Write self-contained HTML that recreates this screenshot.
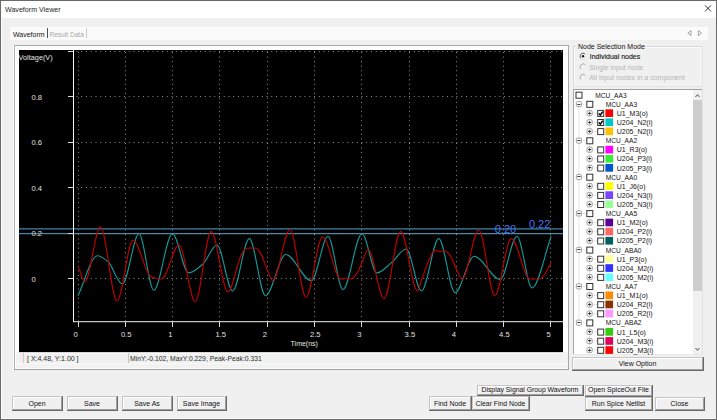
<!DOCTYPE html>
<html><head><meta charset="utf-8">
<style>
html,body{margin:0;padding:0;width:717px;height:420px;overflow:hidden;background:#f0f0f0;}
svg{display:block;font-family:"Liberation Sans", sans-serif;}
</style></head><body>
<svg width="717" height="420" viewBox="0 0 717 420">
<rect x="0" y="0" width="717" height="420" fill="#f0f0f0" />
<rect x="1" y="1" width="715" height="17" fill="#ffffff" />
<text transform="translate(5,11.6) scale(0.92,1)" fill="#1e1e1e" font-size="7.72" text-anchor="start" >Waveform Viewer</text>
<path d="M705,5.4 L711,11.4 M711,5.4 L705,11.4" stroke="#1a1a1a" stroke-width="0.9"/>
<rect x="0" y="0" width="717" height="1" fill="#6a6a6a" />
<rect x="0" y="0" width="1" height="420" fill="#6a6a6a" />
<rect x="716" y="0" width="1" height="420" fill="#6a6a6a" />
<rect x="0" y="419" width="717" height="1" fill="#6a6a6a" />
<rect x="1" y="18" width="1" height="401" fill="#fdfdfd" />
<rect x="1" y="418" width="715" height="1" fill="#fafafa" />
<rect x="10" y="27" width="698" height="13" fill="#fbfbfb" />
<text transform="translate(13,36.5) scale(0.92,1)" fill="#141414" font-size="7.61" text-anchor="start" >Waveform</text>
<rect x="47" y="28" width="1" height="10" fill="#505050" />
<text transform="translate(49.4,36.5) scale(0.92,1)" fill="#a6a6a6" font-size="7.17" text-anchor="start" >Result Data</text>
<rect x="86" y="28" width="1" height="10" fill="#c8c8c8" />
<path d="M691,30.6 L687.8,33.1 L691,35.6 Z" fill="none" stroke="#9c9c9c" stroke-width="0.9"/>
<path d="M698.3,30.6 L701.5,33.1 L698.3,35.6 Z" fill="none" stroke="#9c9c9c" stroke-width="0.9"/>
<rect x="13" y="45" width="1" height="326" fill="#fcfcfc" />
<rect x="14" y="45" width="555" height="325" fill="#f2f2f2" />
<rect x="14" y="45" width="555" height="1" fill="#a8a8a8" />
<rect x="14" y="45" width="1" height="325" fill="#b0b0b0" />
<rect x="568" y="45" width="1" height="325" fill="#a8a8a8" />
<rect x="14" y="369" width="555" height="1" fill="#a0a0a0" />
<rect x="15" y="46" width="1" height="323" fill="#ffffff" />
<rect x="15" y="368" width="553" height="1" fill="#fcfcfc" />
<rect x="16" y="46" width="552" height="306" fill="#fdfdfd" />
<rect x="19" y="352" width="544" height="12" fill="#f0f0f0" />
<rect x="19" y="352" width="544" height="1" fill="#d8d8d8" />
<rect x="19" y="353" width="544" height="1" fill="#f8f8f8" />
<rect x="19" y="363" width="549" height="1" fill="#fafafa" />
<rect x="23" y="353" width="1" height="10" fill="#cccccc" />
<rect x="128" y="353" width="1" height="10" fill="#c4c4c4" />
<text transform="translate(27,360.9) scale(0.92,1)" fill="#2a2a2a" font-size="7.61" text-anchor="start" >[ X:4.48, Y:1.00 ]</text>
<text transform="translate(130,360.9) scale(0.92,1)" fill="#2a2a2a" font-size="7.39" text-anchor="start" >MinY:-0.102, MaxY:0.229, Peak-Peak:0.331</text>
<rect x="19" y="50" width="544" height="302" fill="#000000" />
<line x1="19" y1="228.8" x2="563" y2="228.8" stroke="#3e86aa" stroke-width="1.3" />
<line x1="19" y1="233.7" x2="563" y2="233.7" stroke="#3e86aa" stroke-width="1.3" />
<line x1="78.5" y1="52" x2="78.5" y2="321" stroke="#8c8c8c" stroke-width="1" stroke-dasharray="1 3.55"/>
<line x1="125.5" y1="52" x2="125.5" y2="321" stroke="#8c8c8c" stroke-width="1" stroke-dasharray="1 3.55"/>
<line x1="172.5" y1="52" x2="172.5" y2="321" stroke="#8c8c8c" stroke-width="1" stroke-dasharray="1 3.55"/>
<line x1="219.5" y1="52" x2="219.5" y2="321" stroke="#8c8c8c" stroke-width="1" stroke-dasharray="1 3.55"/>
<line x1="267.5" y1="52" x2="267.5" y2="321" stroke="#8c8c8c" stroke-width="1" stroke-dasharray="1 3.55"/>
<line x1="314.5" y1="52" x2="314.5" y2="321" stroke="#8c8c8c" stroke-width="1" stroke-dasharray="1 3.55"/>
<line x1="361.5" y1="52" x2="361.5" y2="321" stroke="#8c8c8c" stroke-width="1" stroke-dasharray="1 3.55"/>
<line x1="409.5" y1="52" x2="409.5" y2="321" stroke="#8c8c8c" stroke-width="1" stroke-dasharray="1 3.55"/>
<line x1="456.5" y1="52" x2="456.5" y2="321" stroke="#8c8c8c" stroke-width="1" stroke-dasharray="1 3.55"/>
<line x1="503.5" y1="52" x2="503.5" y2="321" stroke="#8c8c8c" stroke-width="1" stroke-dasharray="1 3.55"/>
<line x1="550.5" y1="52" x2="550.5" y2="321" stroke="#8c8c8c" stroke-width="1" stroke-dasharray="1 3.55"/>
<line x1="76.5" y1="51.5" x2="563" y2="51.5" stroke="#8c8c8c" stroke-width="1" stroke-dasharray="1 3.75"/>
<line x1="76.5" y1="96.5" x2="563" y2="96.5" stroke="#8c8c8c" stroke-width="1" stroke-dasharray="1 3.75"/>
<line x1="76.5" y1="142.5" x2="563" y2="142.5" stroke="#8c8c8c" stroke-width="1" stroke-dasharray="1 3.75"/>
<line x1="76.5" y1="187.5" x2="563" y2="187.5" stroke="#8c8c8c" stroke-width="1" stroke-dasharray="1 3.75"/>
<line x1="76.5" y1="233.5" x2="563" y2="233.5" stroke="#8c8c8c" stroke-width="1" stroke-dasharray="1 3.75"/>
<line x1="76.5" y1="278.5" x2="563" y2="278.5" stroke="#8c8c8c" stroke-width="1" stroke-dasharray="1 3.75"/>
<line x1="73.5" y1="50" x2="73.5" y2="322" stroke="#f4f4f4" stroke-width="1" />
<line x1="73" y1="321.7" x2="563" y2="321.7" stroke="#f4f4f4" stroke-width="1" />
<line x1="68" y1="51.5" x2="73" y2="51.5" stroke="#d8d8d8" stroke-width="1" />
<line x1="68" y1="96.5" x2="73" y2="96.5" stroke="#d8d8d8" stroke-width="1" />
<line x1="68" y1="142.5" x2="73" y2="142.5" stroke="#d8d8d8" stroke-width="1" />
<line x1="68" y1="187.5" x2="73" y2="187.5" stroke="#d8d8d8" stroke-width="1" />
<line x1="68" y1="233.5" x2="73" y2="233.5" stroke="#d8d8d8" stroke-width="1" />
<line x1="68" y1="278.5" x2="73" y2="278.5" stroke="#d8d8d8" stroke-width="1" />
<line x1="78.5" y1="322" x2="78.5" y2="327" stroke="#d8d8d8" stroke-width="1" />
<line x1="125.5" y1="322" x2="125.5" y2="327" stroke="#d8d8d8" stroke-width="1" />
<line x1="172.5" y1="322" x2="172.5" y2="327" stroke="#d8d8d8" stroke-width="1" />
<line x1="219.5" y1="322" x2="219.5" y2="327" stroke="#d8d8d8" stroke-width="1" />
<line x1="267.5" y1="322" x2="267.5" y2="327" stroke="#d8d8d8" stroke-width="1" />
<line x1="314.5" y1="322" x2="314.5" y2="327" stroke="#d8d8d8" stroke-width="1" />
<line x1="361.5" y1="322" x2="361.5" y2="327" stroke="#d8d8d8" stroke-width="1" />
<line x1="409.5" y1="322" x2="409.5" y2="327" stroke="#d8d8d8" stroke-width="1" />
<line x1="456.5" y1="322" x2="456.5" y2="327" stroke="#d8d8d8" stroke-width="1" />
<line x1="503.5" y1="322" x2="503.5" y2="327" stroke="#d8d8d8" stroke-width="1" />
<line x1="550.5" y1="322" x2="550.5" y2="327" stroke="#d8d8d8" stroke-width="1" />
<text x="31.5" y="99.8" fill="#e0e0e0" font-size="7.6" text-anchor="start" >0.8</text>
<text x="31.5" y="145.3" fill="#e0e0e0" font-size="7.6" text-anchor="start" >0.6</text>
<text x="31.5" y="190.7" fill="#e0e0e0" font-size="7.6" text-anchor="start" >0.4</text>
<text x="31.5" y="236.2" fill="#e0e0e0" font-size="7.6" text-anchor="start" >0.2</text>
<text x="31.5" y="281.7" fill="#e0e0e0" font-size="7.6" text-anchor="start" >0</text>
<text x="73.6" y="337.0" fill="#e0e0e0" font-size="7.6" text-anchor="start" >0</text>
<text x="120.9" y="337.0" fill="#e0e0e0" font-size="7.6" text-anchor="start" >0.5</text>
<text x="168.2" y="337.0" fill="#e0e0e0" font-size="7.6" text-anchor="start" >1</text>
<text x="215.4" y="337.0" fill="#e0e0e0" font-size="7.6" text-anchor="start" >1.5</text>
<text x="262.7" y="337.0" fill="#e0e0e0" font-size="7.6" text-anchor="start" >2</text>
<text x="310.0" y="337.0" fill="#e0e0e0" font-size="7.6" text-anchor="start" >2.5</text>
<text x="357.3" y="337.0" fill="#e0e0e0" font-size="7.6" text-anchor="start" >3</text>
<text x="404.6" y="337.0" fill="#e0e0e0" font-size="7.6" text-anchor="start" >3.5</text>
<text x="451.8" y="337.0" fill="#e0e0e0" font-size="7.6" text-anchor="start" >4</text>
<text x="499.1" y="337.0" fill="#e0e0e0" font-size="7.6" text-anchor="start" >4.5</text>
<text x="546.4" y="337.0" fill="#e0e0e0" font-size="7.6" text-anchor="start" >5</text>
<text x="18.6" y="60.0" fill="#e6e6e6" font-size="7.3" text-anchor="start" >Voltage(V)</text>
<text transform="translate(290.6,346.2) scale(0.92,1)" fill="#e6e6e6" font-size="7.61" text-anchor="start" >Time(ns)</text>
<path d="M78.0,295.7 C84.5,282.4 90.9,255.7 97.4,255.7 C100.9,255.7 104.5,258.8 108.0,261.7 C112.8,265.6 117.6,283.8 122.4,283.8 C127.9,283.8 133.5,233.8 139.0,233.8 C143.9,233.8 148.9,290.2 153.8,290.2 C160.0,290.2 166.2,233.8 172.4,233.8 C177.8,233.8 183.2,272.9 188.6,272.9 C193.4,272.9 198.1,268.1 202.9,264.0 C207.6,260.0 212.3,245.0 217.0,245.0 C222.2,245.0 227.4,291.0 232.6,291.0 C238.2,291.0 243.7,238.6 249.3,238.6 C254.7,238.6 260.1,295.7 265.5,295.7 C272.2,295.7 279.0,254.5 285.7,254.5 C294.3,254.5 302.8,280.7 311.4,280.7 C316.9,280.7 322.5,236.2 328.0,236.2 C333.0,236.2 337.9,289.5 342.9,289.5 C349.3,289.5 355.6,233.8 362.0,233.8 C367.0,233.8 371.9,272.9 376.9,272.9 C381.7,272.9 386.4,266.7 391.2,262.9 C396.2,258.9 401.2,249.0 406.2,249.0 C411.3,249.0 416.3,291.0 421.4,291.0 C427.2,291.0 433.0,238.6 438.8,238.6 C444.2,238.6 449.6,292.6 455.0,292.6 C461.3,292.6 467.7,256.2 474.0,256.2 C482.7,256.2 491.5,279.5 500.2,279.5 C505.8,279.5 511.4,236.2 517.0,236.2 C522.0,236.2 527.0,287.9 532.0,287.9 C538.4,287.9 544.8,253.4 551.2,236.2" fill="none" stroke="#139797" stroke-width="1.15"/>
<path d="M78.3,266.4 C80.5,271.6 82.6,281.9 84.8,281.9 C90.0,281.9 95.3,226.7 100.5,226.7 C106.0,226.7 111.5,301.0 117.0,301.0 C122.3,301.0 127.7,240.2 133.0,240.2 C139.0,240.2 145.0,274.5 151.0,276.7 C154.6,278.0 158.1,279.0 161.7,279.0 C167.5,279.0 173.2,245.0 179.0,245.0 C184.4,245.0 189.8,301.7 195.2,301.7 C200.5,301.7 205.9,231.4 211.2,231.4 C216.8,231.4 222.3,291.9 227.9,291.9 C232.4,291.9 237.0,262.0 241.5,254.6 C243.2,251.9 244.8,248.5 246.5,248.3 C248.2,248.1 249.8,248.0 251.5,248.0 C253.2,248.0 254.8,248.1 256.5,248.3 C258.1,248.5 259.6,251.9 261.2,254.6 C263.1,257.9 265.1,264.7 267.0,269.0 C268.9,273.3 270.9,280.6 272.8,280.6 C278.5,280.6 284.3,229.5 290.0,229.5 C295.3,229.5 300.7,297.4 306.0,297.4 C311.5,297.4 317.1,236.7 322.6,236.7 C328.7,236.7 334.7,279.2 340.8,279.2 C342.4,279.2 343.9,278.2 345.5,278.2 C347.3,278.2 349.2,278.8 351.0,278.8 C353.0,278.8 355.0,275.8 357.0,273.2 C358.7,271.0 360.3,266.2 362.0,262.6 C364.0,258.3 366.1,249.5 368.1,249.5 C373.4,249.5 378.7,298.6 384.0,298.6 C389.6,298.6 395.1,231.4 400.7,231.4 C406.3,231.4 411.8,291.0 417.4,291.0 C418.9,291.0 420.3,283.2 421.8,279.3 C424.4,272.5 426.9,264.1 429.5,259.0 C431.2,255.7 432.8,250.7 434.5,250.7 C436.3,250.7 438.2,251.3 440.0,251.3 C441.7,251.3 443.3,250.7 445.0,250.7 C447.0,250.7 449.0,254.1 451.0,257.0 C452.6,259.3 454.1,264.2 455.7,267.4 C457.8,271.7 459.9,279.3 462.0,279.3 C467.6,279.3 473.2,230.0 478.8,230.0 C484.1,230.0 489.5,295.7 494.8,295.7 C500.3,295.7 505.7,238.6 511.2,238.6 C517.5,238.6 523.7,279.0 530.0,279.0 C533.3,279.0 536.7,279.0 540.0,279.0 C543.7,279.0 547.5,268.3 551.2,262.9" fill="none" stroke="#bb0000" stroke-width="1.15"/>
<text x="494.8" y="233.3" fill="#4474f4" font-size="11" text-anchor="start" >0.20</text>
<text x="528.9" y="228.0" fill="#4474f4" font-size="11" text-anchor="start" >0.22</text>
<rect x="573.5" y="46.5" width="128.5" height="39.5" fill="none" stroke="#d8d8d8" stroke-width="1"/>
<rect x="574.5" y="47.5" width="126.5" height="37.5" fill="none" stroke="#fbfbfb" stroke-width="1"/>
<rect x="576" y="42" width="70" height="8" fill="#f0f0f0" />
<text transform="translate(578,48.6) scale(0.92,1)" fill="#141414" font-size="7.61" text-anchor="start" >Node Selection Mode</text>
<circle cx="583.0" cy="56.2" r="3.0" fill="#ffffff"/>
<path d="M580.88,58.32 A3.0,3.0 0 0 1 585.12,54.08" fill="none" stroke="#5a5a5a" stroke-width="1"/>
<path d="M585.12,54.08 A3.0,3.0 0 0 1 580.88,58.32" fill="none" stroke="#d8d8d8" stroke-width="1"/>
<circle cx="583.0" cy="56.2" r="1.2" fill="#111"/>
<circle cx="583.0" cy="66.8" r="3.0" fill="#f2f2f2"/>
<path d="M580.88,68.92 A3.0,3.0 0 0 1 585.12,64.68" fill="none" stroke="#a8a8a8" stroke-width="1"/>
<path d="M585.12,64.68 A3.0,3.0 0 0 1 580.88,68.92" fill="none" stroke="#ececec" stroke-width="1"/>
<circle cx="583.0" cy="77.4" r="3.0" fill="#f2f2f2"/>
<path d="M580.88,79.52 A3.0,3.0 0 0 1 585.12,75.28" fill="none" stroke="#a8a8a8" stroke-width="1"/>
<path d="M585.12,75.28 A3.0,3.0 0 0 1 580.88,79.52" fill="none" stroke="#ececec" stroke-width="1"/>
<text transform="translate(589.7,59) scale(0.92,1)" fill="#141414" font-size="7.61" text-anchor="start" stroke="#141414" stroke-width="0.12">Individual nodes</text>
<text transform="translate(589.2,69.8) scale(0.92,1)" fill="#b6b6b6" font-size="7.61" text-anchor="start" >Single input node</text>
<text transform="translate(589.2,80.3) scale(0.92,1)" fill="#b6b6b6" font-size="7.61" text-anchor="start" >All input nodes in a component</text>
<rect x="573" y="89" width="130" height="266" fill="#ffffff" />
<rect x="573" y="89" width="130" height="1" fill="#a0a0a0" />
<rect x="573" y="89" width="1" height="266" fill="#a8a8a8" />
<rect x="702" y="89" width="1" height="266" fill="#e0e0e0" />
<rect x="573" y="354" width="130" height="1" fill="#e8e8e8" />
<rect x="693" y="90" width="9" height="264" fill="#f0f0f0" />
<rect x="693" y="100" width="9" height="191" fill="#cdcdcd" />
<path d="M695.5,97 L697.5,94.6 L699.5,97" fill="none" stroke="#555" stroke-width="1"/>
<path d="M695.5,348 L697.5,350.4 L699.5,348" fill="none" stroke="#555" stroke-width="1"/>
<rect x="605.4" y="109.3" width="7.7" height="7.7" fill="#ff0000" />
<rect x="605.4" y="118.4" width="7.7" height="7.7" fill="#00c8c8" />
<rect x="605.4" y="127.5" width="7.7" height="7.7" fill="#ffc000" />
<rect x="605.4" y="145.8" width="7.7" height="7.7" fill="#ff00ff" />
<rect x="605.4" y="154.9" width="7.7" height="7.7" fill="#33ee33" />
<rect x="605.4" y="164.0" width="7.7" height="7.7" fill="#0055cc" />
<rect x="605.4" y="182.2" width="7.7" height="7.7" fill="#ffff00" />
<rect x="605.4" y="191.3" width="7.7" height="7.7" fill="#7744ff" />
<rect x="605.4" y="200.4" width="7.7" height="7.7" fill="#99ff99" />
<rect x="605.4" y="218.6" width="7.7" height="7.7" fill="#5a0099" />
<rect x="605.4" y="227.7" width="7.7" height="7.7" fill="#ff6666" />
<rect x="605.4" y="236.9" width="7.7" height="7.7" fill="#006060" />
<rect x="605.4" y="255.1" width="7.7" height="7.7" fill="#ffff99" />
<rect x="605.4" y="264.2" width="7.7" height="7.7" fill="#3333ff" />
<rect x="605.4" y="273.3" width="7.7" height="7.7" fill="#66ffff" />
<rect x="605.4" y="291.5" width="7.7" height="7.7" fill="#ff8c00" />
<rect x="605.4" y="300.6" width="7.7" height="7.7" fill="#8b3000" />
<rect x="605.4" y="309.7" width="7.7" height="7.7" fill="#ff99ff" />
<rect x="605.4" y="328.0" width="7.7" height="7.7" fill="#33cc11" />
<rect x="605.4" y="337.1" width="7.7" height="7.7" fill="#e00060" />
<rect x="605.4" y="346.2" width="7.7" height="7.7" fill="#ff0000" />
<line x1="578.9" y1="106.6" x2="578.9" y2="320.2" stroke="#c8c8c8" stroke-width="0.9" stroke-dasharray="1 1"/>
<line x1="589.6" y1="107.6" x2="589.6" y2="129.0" stroke="#c8c8c8" stroke-width="0.9" stroke-dasharray="1 1"/>
<line x1="589.6" y1="144.1" x2="589.6" y2="165.5" stroke="#c8c8c8" stroke-width="0.9" stroke-dasharray="1 1"/>
<line x1="589.6" y1="180.5" x2="589.6" y2="201.9" stroke="#c8c8c8" stroke-width="0.9" stroke-dasharray="1 1"/>
<line x1="589.6" y1="216.9" x2="589.6" y2="238.4" stroke="#c8c8c8" stroke-width="0.9" stroke-dasharray="1 1"/>
<line x1="589.6" y1="253.4" x2="589.6" y2="274.8" stroke="#c8c8c8" stroke-width="0.9" stroke-dasharray="1 1"/>
<line x1="589.6" y1="289.8" x2="589.6" y2="311.2" stroke="#c8c8c8" stroke-width="0.9" stroke-dasharray="1 1"/>
<line x1="589.6" y1="326.2" x2="589.6" y2="347.7" stroke="#c8c8c8" stroke-width="0.9" stroke-dasharray="1 1"/>
<rect x="576.0" y="92.2" width="6" height="6" fill="#fff" stroke="#333" stroke-width="1"/>
<text transform="translate(595.3,97.6) scale(0.874,1)" fill="#141414" font-size="7.61">MCU_AA3</text>
<line x1="581.5" y1="104.1" x2="586.3" y2="104.1" stroke="#c8c8c8" stroke-width="0.9" stroke-dasharray="1 1"/>
<rect x="576.3" y="101.5" width="5.2" height="5.2" rx="1.2" fill="#f6f6f6" stroke="#9a9a9a" stroke-width="0.9"/>
<line x1="577.4" y1="104.5" x2="580.4" y2="104.5" stroke="#222" stroke-width="0.9"/>
<rect x="586.8" y="101.3" width="6" height="6" fill="#fff" stroke="#333" stroke-width="1"/>
<text transform="translate(605.8,106.7) scale(0.874,1)" fill="#141414" font-size="7.61">MCU_AA3</text>
<line x1="592.2" y1="113.2" x2="597.2" y2="113.2" stroke="#c8c8c8" stroke-width="0.9" stroke-dasharray="1 1"/>
<rect x="587.0" y="110.6" width="5.2" height="5.2" rx="1.2" fill="#f6f6f6" stroke="#9a9a9a" stroke-width="0.9"/>
<line x1="588.1" y1="113.5" x2="591.1" y2="113.5" stroke="#222" stroke-width="0.9"/>
<line x1="589.6" y1="111.8" x2="589.6" y2="114.6" stroke="#222" stroke-width="0.8"/>
<rect x="597.7" y="110.4" width="6" height="6" fill="#fff" stroke="#333" stroke-width="1"/>
<path d="M598.8,113.4 L600.3,115.0 L602.8,111.6" fill="none" stroke="#000" stroke-width="1.5"/>
<text transform="translate(616.8,115.8) scale(0.920,1)" fill="#141414" font-size="7.61">U1_M3(o)</text>
<line x1="592.2" y1="122.3" x2="597.2" y2="122.3" stroke="#c8c8c8" stroke-width="0.9" stroke-dasharray="1 1"/>
<rect x="587.0" y="119.7" width="5.2" height="5.2" rx="1.2" fill="#f6f6f6" stroke="#9a9a9a" stroke-width="0.9"/>
<line x1="588.1" y1="122.5" x2="591.1" y2="122.5" stroke="#222" stroke-width="0.9"/>
<line x1="589.6" y1="120.9" x2="589.6" y2="123.7" stroke="#222" stroke-width="0.8"/>
<rect x="597.7" y="119.5" width="6" height="6" fill="#fff" stroke="#333" stroke-width="1"/>
<path d="M598.8,122.5 L600.3,124.1 L602.8,120.7" fill="none" stroke="#000" stroke-width="1.5"/>
<text transform="translate(616.8,124.9) scale(0.920,1)" fill="#141414" font-size="7.61">U204_N2(i)</text>
<line x1="592.2" y1="131.4" x2="597.2" y2="131.4" stroke="#c8c8c8" stroke-width="0.9" stroke-dasharray="1 1"/>
<rect x="587.0" y="128.8" width="5.2" height="5.2" rx="1.2" fill="#f6f6f6" stroke="#9a9a9a" stroke-width="0.9"/>
<line x1="588.1" y1="131.5" x2="591.1" y2="131.5" stroke="#222" stroke-width="0.9"/>
<line x1="589.6" y1="130.0" x2="589.6" y2="132.8" stroke="#222" stroke-width="0.8"/>
<rect x="597.7" y="128.6" width="6" height="6" fill="#fff" stroke="#333" stroke-width="1"/>
<text transform="translate(616.8,134.0) scale(0.920,1)" fill="#141414" font-size="7.61">U205_N2(i)</text>
<line x1="581.5" y1="140.6" x2="586.3" y2="140.6" stroke="#c8c8c8" stroke-width="0.9" stroke-dasharray="1 1"/>
<rect x="576.3" y="138.0" width="5.2" height="5.2" rx="1.2" fill="#f6f6f6" stroke="#9a9a9a" stroke-width="0.9"/>
<line x1="577.4" y1="140.5" x2="580.4" y2="140.5" stroke="#222" stroke-width="0.9"/>
<rect x="586.8" y="137.8" width="6" height="6" fill="#fff" stroke="#333" stroke-width="1"/>
<text transform="translate(605.8,143.2) scale(0.874,1)" fill="#141414" font-size="7.61">MCU_AA2</text>
<line x1="592.2" y1="149.7" x2="597.2" y2="149.7" stroke="#c8c8c8" stroke-width="0.9" stroke-dasharray="1 1"/>
<rect x="587.0" y="147.1" width="5.2" height="5.2" rx="1.2" fill="#f6f6f6" stroke="#9a9a9a" stroke-width="0.9"/>
<line x1="588.1" y1="149.5" x2="591.1" y2="149.5" stroke="#222" stroke-width="0.9"/>
<line x1="589.6" y1="148.3" x2="589.6" y2="151.1" stroke="#222" stroke-width="0.8"/>
<rect x="597.7" y="146.9" width="6" height="6" fill="#fff" stroke="#333" stroke-width="1"/>
<text transform="translate(616.8,152.3) scale(0.920,1)" fill="#141414" font-size="7.61">U1_R3(o)</text>
<line x1="592.2" y1="158.8" x2="597.2" y2="158.8" stroke="#c8c8c8" stroke-width="0.9" stroke-dasharray="1 1"/>
<rect x="587.0" y="156.2" width="5.2" height="5.2" rx="1.2" fill="#f6f6f6" stroke="#9a9a9a" stroke-width="0.9"/>
<line x1="588.1" y1="158.5" x2="591.1" y2="158.5" stroke="#222" stroke-width="0.9"/>
<line x1="589.6" y1="157.4" x2="589.6" y2="160.2" stroke="#222" stroke-width="0.8"/>
<rect x="597.7" y="156.0" width="6" height="6" fill="#fff" stroke="#333" stroke-width="1"/>
<text transform="translate(616.8,161.4) scale(0.920,1)" fill="#141414" font-size="7.61">U204_P3(i)</text>
<line x1="592.2" y1="167.9" x2="597.2" y2="167.9" stroke="#c8c8c8" stroke-width="0.9" stroke-dasharray="1 1"/>
<rect x="587.0" y="165.3" width="5.2" height="5.2" rx="1.2" fill="#f6f6f6" stroke="#9a9a9a" stroke-width="0.9"/>
<line x1="588.1" y1="167.5" x2="591.1" y2="167.5" stroke="#222" stroke-width="0.9"/>
<line x1="589.6" y1="166.5" x2="589.6" y2="169.3" stroke="#222" stroke-width="0.8"/>
<rect x="597.7" y="165.1" width="6" height="6" fill="#fff" stroke="#333" stroke-width="1"/>
<text transform="translate(616.8,170.5) scale(0.920,1)" fill="#141414" font-size="7.61">U205_P3(i)</text>
<line x1="581.5" y1="177.0" x2="586.3" y2="177.0" stroke="#c8c8c8" stroke-width="0.9" stroke-dasharray="1 1"/>
<rect x="576.3" y="174.4" width="5.2" height="5.2" rx="1.2" fill="#f6f6f6" stroke="#9a9a9a" stroke-width="0.9"/>
<line x1="577.4" y1="176.5" x2="580.4" y2="176.5" stroke="#222" stroke-width="0.9"/>
<rect x="586.8" y="174.2" width="6" height="6" fill="#fff" stroke="#333" stroke-width="1"/>
<text transform="translate(605.8,179.6) scale(0.874,1)" fill="#141414" font-size="7.61">MCU_AA0</text>
<line x1="592.2" y1="186.1" x2="597.2" y2="186.1" stroke="#c8c8c8" stroke-width="0.9" stroke-dasharray="1 1"/>
<rect x="587.0" y="183.5" width="5.2" height="5.2" rx="1.2" fill="#f6f6f6" stroke="#9a9a9a" stroke-width="0.9"/>
<line x1="588.1" y1="186.5" x2="591.1" y2="186.5" stroke="#222" stroke-width="0.9"/>
<line x1="589.6" y1="184.7" x2="589.6" y2="187.5" stroke="#222" stroke-width="0.8"/>
<rect x="597.7" y="183.3" width="6" height="6" fill="#fff" stroke="#333" stroke-width="1"/>
<text transform="translate(616.8,188.7) scale(0.920,1)" fill="#141414" font-size="7.61">U1_J6(o)</text>
<line x1="592.2" y1="195.2" x2="597.2" y2="195.2" stroke="#c8c8c8" stroke-width="0.9" stroke-dasharray="1 1"/>
<rect x="587.0" y="192.6" width="5.2" height="5.2" rx="1.2" fill="#f6f6f6" stroke="#9a9a9a" stroke-width="0.9"/>
<line x1="588.1" y1="195.5" x2="591.1" y2="195.5" stroke="#222" stroke-width="0.9"/>
<line x1="589.6" y1="193.8" x2="589.6" y2="196.6" stroke="#222" stroke-width="0.8"/>
<rect x="597.7" y="192.4" width="6" height="6" fill="#fff" stroke="#333" stroke-width="1"/>
<text transform="translate(616.8,197.8) scale(0.920,1)" fill="#141414" font-size="7.61">U204_N3(i)</text>
<line x1="592.2" y1="204.3" x2="597.2" y2="204.3" stroke="#c8c8c8" stroke-width="0.9" stroke-dasharray="1 1"/>
<rect x="587.0" y="201.7" width="5.2" height="5.2" rx="1.2" fill="#f6f6f6" stroke="#9a9a9a" stroke-width="0.9"/>
<line x1="588.1" y1="204.5" x2="591.1" y2="204.5" stroke="#222" stroke-width="0.9"/>
<line x1="589.6" y1="202.9" x2="589.6" y2="205.7" stroke="#222" stroke-width="0.8"/>
<rect x="597.7" y="201.5" width="6" height="6" fill="#fff" stroke="#333" stroke-width="1"/>
<text transform="translate(616.8,206.9) scale(0.920,1)" fill="#141414" font-size="7.61">U205_N3(i)</text>
<line x1="581.5" y1="213.4" x2="586.3" y2="213.4" stroke="#c8c8c8" stroke-width="0.9" stroke-dasharray="1 1"/>
<rect x="576.3" y="210.8" width="5.2" height="5.2" rx="1.2" fill="#f6f6f6" stroke="#9a9a9a" stroke-width="0.9"/>
<line x1="577.4" y1="213.5" x2="580.4" y2="213.5" stroke="#222" stroke-width="0.9"/>
<rect x="586.8" y="210.6" width="6" height="6" fill="#fff" stroke="#333" stroke-width="1"/>
<text transform="translate(605.8,216.0) scale(0.874,1)" fill="#141414" font-size="7.61">MCU_AA5</text>
<line x1="592.2" y1="222.5" x2="597.2" y2="222.5" stroke="#c8c8c8" stroke-width="0.9" stroke-dasharray="1 1"/>
<rect x="587.0" y="219.9" width="5.2" height="5.2" rx="1.2" fill="#f6f6f6" stroke="#9a9a9a" stroke-width="0.9"/>
<line x1="588.1" y1="222.5" x2="591.1" y2="222.5" stroke="#222" stroke-width="0.9"/>
<line x1="589.6" y1="221.1" x2="589.6" y2="223.9" stroke="#222" stroke-width="0.8"/>
<rect x="597.7" y="219.7" width="6" height="6" fill="#fff" stroke="#333" stroke-width="1"/>
<text transform="translate(616.8,225.1) scale(0.920,1)" fill="#141414" font-size="7.61">U1_M2(o)</text>
<line x1="592.2" y1="231.6" x2="597.2" y2="231.6" stroke="#c8c8c8" stroke-width="0.9" stroke-dasharray="1 1"/>
<rect x="587.0" y="229.0" width="5.2" height="5.2" rx="1.2" fill="#f6f6f6" stroke="#9a9a9a" stroke-width="0.9"/>
<line x1="588.1" y1="231.5" x2="591.1" y2="231.5" stroke="#222" stroke-width="0.9"/>
<line x1="589.6" y1="230.2" x2="589.6" y2="233.0" stroke="#222" stroke-width="0.8"/>
<rect x="597.7" y="228.8" width="6" height="6" fill="#fff" stroke="#333" stroke-width="1"/>
<text transform="translate(616.8,234.2) scale(0.920,1)" fill="#141414" font-size="7.61">U204_P2(i)</text>
<line x1="592.2" y1="240.8" x2="597.2" y2="240.8" stroke="#c8c8c8" stroke-width="0.9" stroke-dasharray="1 1"/>
<rect x="587.0" y="238.2" width="5.2" height="5.2" rx="1.2" fill="#f6f6f6" stroke="#9a9a9a" stroke-width="0.9"/>
<line x1="588.1" y1="240.5" x2="591.1" y2="240.5" stroke="#222" stroke-width="0.9"/>
<line x1="589.6" y1="239.4" x2="589.6" y2="242.2" stroke="#222" stroke-width="0.8"/>
<rect x="597.7" y="238.0" width="6" height="6" fill="#fff" stroke="#333" stroke-width="1"/>
<text transform="translate(616.8,243.4) scale(0.920,1)" fill="#141414" font-size="7.61">U205_P2(i)</text>
<line x1="581.5" y1="249.9" x2="586.3" y2="249.9" stroke="#c8c8c8" stroke-width="0.9" stroke-dasharray="1 1"/>
<rect x="576.3" y="247.3" width="5.2" height="5.2" rx="1.2" fill="#f6f6f6" stroke="#9a9a9a" stroke-width="0.9"/>
<line x1="577.4" y1="249.5" x2="580.4" y2="249.5" stroke="#222" stroke-width="0.9"/>
<rect x="586.8" y="247.1" width="6" height="6" fill="#fff" stroke="#333" stroke-width="1"/>
<text transform="translate(605.8,252.5) scale(0.874,1)" fill="#141414" font-size="7.61">MCU_ABA0</text>
<line x1="592.2" y1="259.0" x2="597.2" y2="259.0" stroke="#c8c8c8" stroke-width="0.9" stroke-dasharray="1 1"/>
<rect x="587.0" y="256.4" width="5.2" height="5.2" rx="1.2" fill="#f6f6f6" stroke="#9a9a9a" stroke-width="0.9"/>
<line x1="588.1" y1="258.5" x2="591.1" y2="258.5" stroke="#222" stroke-width="0.9"/>
<line x1="589.6" y1="257.6" x2="589.6" y2="260.4" stroke="#222" stroke-width="0.8"/>
<rect x="597.7" y="256.2" width="6" height="6" fill="#fff" stroke="#333" stroke-width="1"/>
<text transform="translate(616.8,261.6) scale(0.920,1)" fill="#141414" font-size="7.61">U1_P3(o)</text>
<line x1="592.2" y1="268.1" x2="597.2" y2="268.1" stroke="#c8c8c8" stroke-width="0.9" stroke-dasharray="1 1"/>
<rect x="587.0" y="265.5" width="5.2" height="5.2" rx="1.2" fill="#f6f6f6" stroke="#9a9a9a" stroke-width="0.9"/>
<line x1="588.1" y1="268.5" x2="591.1" y2="268.5" stroke="#222" stroke-width="0.9"/>
<line x1="589.6" y1="266.7" x2="589.6" y2="269.5" stroke="#222" stroke-width="0.8"/>
<rect x="597.7" y="265.3" width="6" height="6" fill="#fff" stroke="#333" stroke-width="1"/>
<text transform="translate(616.8,270.7) scale(0.920,1)" fill="#141414" font-size="7.61">U204_M2(i)</text>
<line x1="592.2" y1="277.2" x2="597.2" y2="277.2" stroke="#c8c8c8" stroke-width="0.9" stroke-dasharray="1 1"/>
<rect x="587.0" y="274.6" width="5.2" height="5.2" rx="1.2" fill="#f6f6f6" stroke="#9a9a9a" stroke-width="0.9"/>
<line x1="588.1" y1="277.5" x2="591.1" y2="277.5" stroke="#222" stroke-width="0.9"/>
<line x1="589.6" y1="275.8" x2="589.6" y2="278.6" stroke="#222" stroke-width="0.8"/>
<rect x="597.7" y="274.4" width="6" height="6" fill="#fff" stroke="#333" stroke-width="1"/>
<text transform="translate(616.8,279.8) scale(0.920,1)" fill="#141414" font-size="7.61">U205_M2(i)</text>
<line x1="581.5" y1="286.3" x2="586.3" y2="286.3" stroke="#c8c8c8" stroke-width="0.9" stroke-dasharray="1 1"/>
<rect x="576.3" y="283.7" width="5.2" height="5.2" rx="1.2" fill="#f6f6f6" stroke="#9a9a9a" stroke-width="0.9"/>
<line x1="577.4" y1="286.5" x2="580.4" y2="286.5" stroke="#222" stroke-width="0.9"/>
<rect x="586.8" y="283.5" width="6" height="6" fill="#fff" stroke="#333" stroke-width="1"/>
<text transform="translate(605.8,288.9) scale(0.874,1)" fill="#141414" font-size="7.61">MCU_AA7</text>
<line x1="592.2" y1="295.4" x2="597.2" y2="295.4" stroke="#c8c8c8" stroke-width="0.9" stroke-dasharray="1 1"/>
<rect x="587.0" y="292.8" width="5.2" height="5.2" rx="1.2" fill="#f6f6f6" stroke="#9a9a9a" stroke-width="0.9"/>
<line x1="588.1" y1="295.5" x2="591.1" y2="295.5" stroke="#222" stroke-width="0.9"/>
<line x1="589.6" y1="294.0" x2="589.6" y2="296.8" stroke="#222" stroke-width="0.8"/>
<rect x="597.7" y="292.6" width="6" height="6" fill="#fff" stroke="#333" stroke-width="1"/>
<text transform="translate(616.8,298.0) scale(0.920,1)" fill="#141414" font-size="7.61">U1_M1(o)</text>
<line x1="592.2" y1="304.5" x2="597.2" y2="304.5" stroke="#c8c8c8" stroke-width="0.9" stroke-dasharray="1 1"/>
<rect x="587.0" y="301.9" width="5.2" height="5.2" rx="1.2" fill="#f6f6f6" stroke="#9a9a9a" stroke-width="0.9"/>
<line x1="588.1" y1="304.5" x2="591.1" y2="304.5" stroke="#222" stroke-width="0.9"/>
<line x1="589.6" y1="303.1" x2="589.6" y2="305.9" stroke="#222" stroke-width="0.8"/>
<rect x="597.7" y="301.7" width="6" height="6" fill="#fff" stroke="#333" stroke-width="1"/>
<text transform="translate(616.8,307.1) scale(0.920,1)" fill="#141414" font-size="7.61">U204_R2(i)</text>
<line x1="592.2" y1="313.6" x2="597.2" y2="313.6" stroke="#c8c8c8" stroke-width="0.9" stroke-dasharray="1 1"/>
<rect x="587.0" y="311.0" width="5.2" height="5.2" rx="1.2" fill="#f6f6f6" stroke="#9a9a9a" stroke-width="0.9"/>
<line x1="588.1" y1="313.5" x2="591.1" y2="313.5" stroke="#222" stroke-width="0.9"/>
<line x1="589.6" y1="312.2" x2="589.6" y2="315.0" stroke="#222" stroke-width="0.8"/>
<rect x="597.7" y="310.8" width="6" height="6" fill="#fff" stroke="#333" stroke-width="1"/>
<text transform="translate(616.8,316.2) scale(0.920,1)" fill="#141414" font-size="7.61">U205_R2(i)</text>
<line x1="581.5" y1="322.8" x2="586.3" y2="322.8" stroke="#c8c8c8" stroke-width="0.9" stroke-dasharray="1 1"/>
<rect x="576.3" y="320.1" width="5.2" height="5.2" rx="1.2" fill="#f6f6f6" stroke="#9a9a9a" stroke-width="0.9"/>
<line x1="577.4" y1="322.5" x2="580.4" y2="322.5" stroke="#222" stroke-width="0.9"/>
<rect x="586.8" y="319.9" width="6" height="6" fill="#fff" stroke="#333" stroke-width="1"/>
<text transform="translate(605.8,325.4) scale(0.874,1)" fill="#141414" font-size="7.61">MCU_ABA2</text>
<line x1="592.2" y1="331.9" x2="597.2" y2="331.9" stroke="#c8c8c8" stroke-width="0.9" stroke-dasharray="1 1"/>
<rect x="587.0" y="329.3" width="5.2" height="5.2" rx="1.2" fill="#f6f6f6" stroke="#9a9a9a" stroke-width="0.9"/>
<line x1="588.1" y1="331.5" x2="591.1" y2="331.5" stroke="#222" stroke-width="0.9"/>
<line x1="589.6" y1="330.5" x2="589.6" y2="333.3" stroke="#222" stroke-width="0.8"/>
<rect x="597.7" y="329.1" width="6" height="6" fill="#fff" stroke="#333" stroke-width="1"/>
<text transform="translate(616.8,334.5) scale(0.920,1)" fill="#141414" font-size="7.61">U1_L5(o)</text>
<line x1="592.2" y1="341.0" x2="597.2" y2="341.0" stroke="#c8c8c8" stroke-width="0.9" stroke-dasharray="1 1"/>
<rect x="587.0" y="338.4" width="5.2" height="5.2" rx="1.2" fill="#f6f6f6" stroke="#9a9a9a" stroke-width="0.9"/>
<line x1="588.1" y1="340.5" x2="591.1" y2="340.5" stroke="#222" stroke-width="0.9"/>
<line x1="589.6" y1="339.6" x2="589.6" y2="342.4" stroke="#222" stroke-width="0.8"/>
<rect x="597.7" y="338.2" width="6" height="6" fill="#fff" stroke="#333" stroke-width="1"/>
<text transform="translate(616.8,343.6) scale(0.920,1)" fill="#141414" font-size="7.61">U204_M3(i)</text>
<line x1="592.2" y1="350.1" x2="597.2" y2="350.1" stroke="#c8c8c8" stroke-width="0.9" stroke-dasharray="1 1"/>
<rect x="587.0" y="347.5" width="5.2" height="5.2" rx="1.2" fill="#f6f6f6" stroke="#9a9a9a" stroke-width="0.9"/>
<line x1="588.1" y1="350.5" x2="591.1" y2="350.5" stroke="#222" stroke-width="0.9"/>
<line x1="589.6" y1="348.7" x2="589.6" y2="351.5" stroke="#222" stroke-width="0.8"/>
<rect x="597.7" y="347.3" width="6" height="6" fill="#fff" stroke="#333" stroke-width="1"/>
<text transform="translate(616.8,352.7) scale(0.920,1)" fill="#141414" font-size="7.61">U205_M3(i)</text>
<rect x="572" y="357" width="132" height="14" fill="#f0f0f0" />
<rect x="572" y="357" width="132" height="1" fill="#c4c4c4" />
<rect x="572" y="357" width="1" height="14" fill="#c4c4c4" />
<rect x="573" y="358" width="130" height="1" fill="#ffffff" />
<rect x="573" y="358" width="1" height="12" fill="#ffffff" />
<rect x="572" y="370" width="132" height="1" fill="#696969" />
<rect x="703" y="357" width="1" height="14" fill="#696969" />
<rect x="573" y="369" width="130" height="1" fill="#a0a0a0" />
<rect x="702" y="358" width="1" height="12" fill="#a0a0a0" />
<text transform="translate(637.5,366.3) scale(0.92,1)" fill="#111" font-size="7.61" text-anchor="middle" >View Option</text>
<rect x="12" y="396" width="51" height="15" fill="#f0f0f0" />
<rect x="12" y="396" width="51" height="1" fill="#c4c4c4" />
<rect x="12" y="396" width="1" height="15" fill="#c4c4c4" />
<rect x="13" y="397" width="49" height="1" fill="#ffffff" />
<rect x="13" y="397" width="1" height="13" fill="#ffffff" />
<rect x="12" y="410" width="51" height="1" fill="#696969" />
<rect x="62" y="396" width="1" height="15" fill="#696969" />
<rect x="13" y="409" width="49" height="1" fill="#a0a0a0" />
<rect x="61" y="397" width="1" height="13" fill="#a0a0a0" />
<text transform="translate(37.0,406.2) scale(0.92,1)" fill="#111" font-size="7.61" text-anchor="middle" >Open</text>
<rect x="67" y="396" width="51" height="15" fill="#f0f0f0" />
<rect x="67" y="396" width="51" height="1" fill="#c4c4c4" />
<rect x="67" y="396" width="1" height="15" fill="#c4c4c4" />
<rect x="68" y="397" width="49" height="1" fill="#ffffff" />
<rect x="68" y="397" width="1" height="13" fill="#ffffff" />
<rect x="67" y="410" width="51" height="1" fill="#696969" />
<rect x="117" y="396" width="1" height="15" fill="#696969" />
<rect x="68" y="409" width="49" height="1" fill="#a0a0a0" />
<rect x="116" y="397" width="1" height="13" fill="#a0a0a0" />
<text transform="translate(92.0,406.2) scale(0.92,1)" fill="#111" font-size="7.61" text-anchor="middle" >Save</text>
<rect x="122" y="396" width="51" height="15" fill="#f0f0f0" />
<rect x="122" y="396" width="51" height="1" fill="#c4c4c4" />
<rect x="122" y="396" width="1" height="15" fill="#c4c4c4" />
<rect x="123" y="397" width="49" height="1" fill="#ffffff" />
<rect x="123" y="397" width="1" height="13" fill="#ffffff" />
<rect x="122" y="410" width="51" height="1" fill="#696969" />
<rect x="172" y="396" width="1" height="15" fill="#696969" />
<rect x="123" y="409" width="49" height="1" fill="#a0a0a0" />
<rect x="171" y="397" width="1" height="13" fill="#a0a0a0" />
<text transform="translate(147.0,406.2) scale(0.92,1)" fill="#111" font-size="7.61" text-anchor="middle" >Save As</text>
<rect x="177" y="396" width="50" height="15" fill="#f0f0f0" />
<rect x="177" y="396" width="50" height="1" fill="#c4c4c4" />
<rect x="177" y="396" width="1" height="15" fill="#c4c4c4" />
<rect x="178" y="397" width="48" height="1" fill="#ffffff" />
<rect x="178" y="397" width="1" height="13" fill="#ffffff" />
<rect x="177" y="410" width="50" height="1" fill="#696969" />
<rect x="226" y="396" width="1" height="15" fill="#696969" />
<rect x="178" y="409" width="48" height="1" fill="#a0a0a0" />
<rect x="225" y="397" width="1" height="13" fill="#a0a0a0" />
<text transform="translate(201.5,406.2) scale(0.92,1)" fill="#111" font-size="7.61" text-anchor="middle" >Save Image</text>
<rect x="429" y="396" width="43" height="15" fill="#f0f0f0" />
<rect x="429" y="396" width="43" height="1" fill="#c4c4c4" />
<rect x="429" y="396" width="1" height="15" fill="#c4c4c4" />
<rect x="430" y="397" width="41" height="1" fill="#ffffff" />
<rect x="430" y="397" width="1" height="13" fill="#ffffff" />
<rect x="429" y="410" width="43" height="1" fill="#696969" />
<rect x="471" y="396" width="1" height="15" fill="#696969" />
<rect x="430" y="409" width="41" height="1" fill="#a0a0a0" />
<rect x="470" y="397" width="1" height="13" fill="#a0a0a0" />
<text transform="translate(450.0,406.2) scale(0.92,1)" fill="#111" font-size="7.61" text-anchor="middle" >Find Node</text>
<rect x="472" y="396" width="58" height="15" fill="#f0f0f0" />
<rect x="472" y="396" width="58" height="1" fill="#c4c4c4" />
<rect x="472" y="396" width="1" height="15" fill="#c4c4c4" />
<rect x="473" y="397" width="56" height="1" fill="#ffffff" />
<rect x="473" y="397" width="1" height="13" fill="#ffffff" />
<rect x="472" y="410" width="58" height="1" fill="#696969" />
<rect x="529" y="396" width="1" height="15" fill="#696969" />
<rect x="473" y="409" width="56" height="1" fill="#a0a0a0" />
<rect x="528" y="397" width="1" height="13" fill="#a0a0a0" />
<text transform="translate(500.5,406.2) scale(0.92,1)" fill="#111" font-size="7.45" text-anchor="middle" >Clear Find Node</text>
<rect x="585" y="397" width="68" height="14" fill="#f0f0f0" />
<rect x="585" y="397" width="68" height="1" fill="#c4c4c4" />
<rect x="585" y="397" width="1" height="14" fill="#c4c4c4" />
<rect x="586" y="398" width="66" height="1" fill="#ffffff" />
<rect x="586" y="398" width="1" height="12" fill="#ffffff" />
<rect x="585" y="410" width="68" height="1" fill="#696969" />
<rect x="652" y="397" width="1" height="14" fill="#696969" />
<rect x="586" y="409" width="66" height="1" fill="#a0a0a0" />
<rect x="651" y="398" width="1" height="12" fill="#a0a0a0" />
<text transform="translate(618.5,405.6) scale(0.92,1)" fill="#111" font-size="7.61" text-anchor="middle" >Run Spice Netlist</text>
<rect x="655" y="397" width="50" height="14" fill="#f0f0f0" />
<rect x="655" y="397" width="50" height="1" fill="#c4c4c4" />
<rect x="655" y="397" width="1" height="14" fill="#c4c4c4" />
<rect x="656" y="398" width="48" height="1" fill="#ffffff" />
<rect x="656" y="398" width="1" height="12" fill="#ffffff" />
<rect x="655" y="410" width="50" height="1" fill="#696969" />
<rect x="704" y="397" width="1" height="14" fill="#696969" />
<rect x="656" y="409" width="48" height="1" fill="#a0a0a0" />
<rect x="703" y="398" width="1" height="12" fill="#a0a0a0" />
<text transform="translate(679.5,405.6) scale(0.92,1)" fill="#111" font-size="7.61" text-anchor="middle" >Close</text>
<rect x="477" y="385" width="107" height="11" fill="#f0f0f0" />
<rect x="477" y="385" width="107" height="1" fill="#c4c4c4" />
<rect x="477" y="385" width="1" height="11" fill="#c4c4c4" />
<rect x="478" y="386" width="105" height="1" fill="#ffffff" />
<rect x="478" y="386" width="1" height="9" fill="#ffffff" />
<rect x="477" y="395" width="107" height="1" fill="#696969" />
<rect x="583" y="385" width="1" height="11" fill="#696969" />
<rect x="478" y="394" width="105" height="1" fill="#a0a0a0" />
<rect x="582" y="386" width="1" height="9" fill="#a0a0a0" />
<text transform="translate(530.0,392.3) scale(0.92,1)" fill="#111" font-size="7.45" text-anchor="middle" >Display Signal Group Waveform</text>
<rect x="585" y="385" width="68" height="12" fill="#f0f0f0" />
<rect x="585" y="385" width="68" height="1" fill="#c4c4c4" />
<rect x="585" y="385" width="1" height="12" fill="#c4c4c4" />
<rect x="586" y="386" width="66" height="1" fill="#ffffff" />
<rect x="586" y="386" width="1" height="10" fill="#ffffff" />
<rect x="585" y="396" width="68" height="1" fill="#696969" />
<rect x="652" y="385" width="1" height="12" fill="#696969" />
<rect x="586" y="395" width="66" height="1" fill="#a0a0a0" />
<rect x="651" y="386" width="1" height="10" fill="#a0a0a0" />
<text transform="translate(618.5,392.3) scale(0.92,1)" fill="#111" font-size="7.61" text-anchor="middle" >Open SpiceOut File</text>
</svg>
</body></html>
